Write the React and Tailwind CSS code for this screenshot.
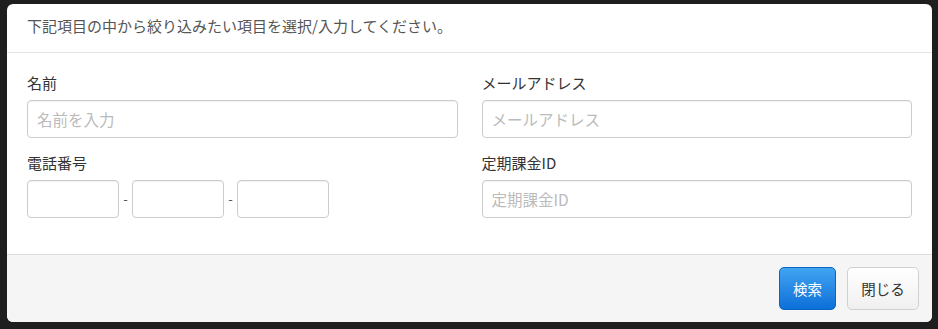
import { useState } from "react";

const font = { fontFamily: '"Noto Sans CJK JP", "Noto Sans", sans-serif' };

function Field({ label, placeholder }) {
  return (
    <div className="mb-[15px]">
      <label className="block text-[15px] leading-[20px] text-[#333] mb-[7px]">{label}</label>
      <input
        placeholder={placeholder}
        className="w-full h-[38px] px-[9px] rounded-[4px] border border-[#cccccc] bg-white text-[15.5px] text-[#333] placeholder:text-[#bbbbbb] outline-none shadow-[inset_0_1px_1px_rgba(0,0,0,0.06)]"
      />
    </div>
  );
}

export default function App() {
  const [tel, setTel] = useState(["", "", ""]);

  return (
    <div className="w-[938px] h-[329px] bg-[#1e1e1e] pt-[4px] pl-[7px] overflow-hidden" style={font}>
      <div className="w-[925px] h-[318px] bg-white rounded-[6px] flex flex-col overflow-hidden">
        <div className="h-[49px] px-5 flex items-center border-b border-[#e5e5e5]">
          <p className="text-[15px] text-[#555] -mt-[4px]">
            下記項目の中から絞り込みたい項目を選択/入力してください。
          </p>
        </div>

        <div className="px-5 pt-5 pb-5 h-[201px] grid grid-cols-2 gap-x-6 content-start">
          <Field label="名前" placeholder="名前を入力" />
          <Field label="メールアドレス" placeholder="メールアドレス" />
          <div className="mb-[15px]">
            <label className="block text-[15px] leading-[20px] text-[#333] mb-[7px]">電話番号</label>
            <div className="flex items-center">
              {tel.map((v, i) => (
                <div key={i} className="flex items-center">
                  {i > 0 && <span className="w-[13px] text-center text-[13px] text-[#555]">-</span>}
                  <input
                    value={v}
                    onChange={(e) => {
                      const next = [...tel];
                      next[i] = e.target.value;
                      setTel(next);
                    }}
                    className="w-[92px] h-[38px] px-[8px] rounded-[4px] border border-[#cccccc] bg-white outline-none shadow-[inset_0_1px_1px_rgba(0,0,0,0.06)]"
                  />
                </div>
              ))}
            </div>
          </div>
          <Field label="定期課金ID" placeholder="定期課金ID" />
        </div>

        <div className="flex-1 bg-[#f5f5f5] border-t border-[#dddddd] flex justify-end items-start pt-[12px] pr-[13px] gap-[11px]">
          <button className="w-[57px] h-[43px] rounded-[5px] border border-[#0a64c2] bg-gradient-to-b from-[#40a4f2] to-[#0a6fd8] text-white text-[14.5px]">
            検索
          </button>
          <button className="w-[72px] h-[43px] rounded-[5px] border border-[#d0d0d0] bg-gradient-to-b from-white to-[#f0f0f0] text-[#333] text-[14.5px]">
            閉じる
          </button>
        </div>
      </div>
    </div>
  );
}
